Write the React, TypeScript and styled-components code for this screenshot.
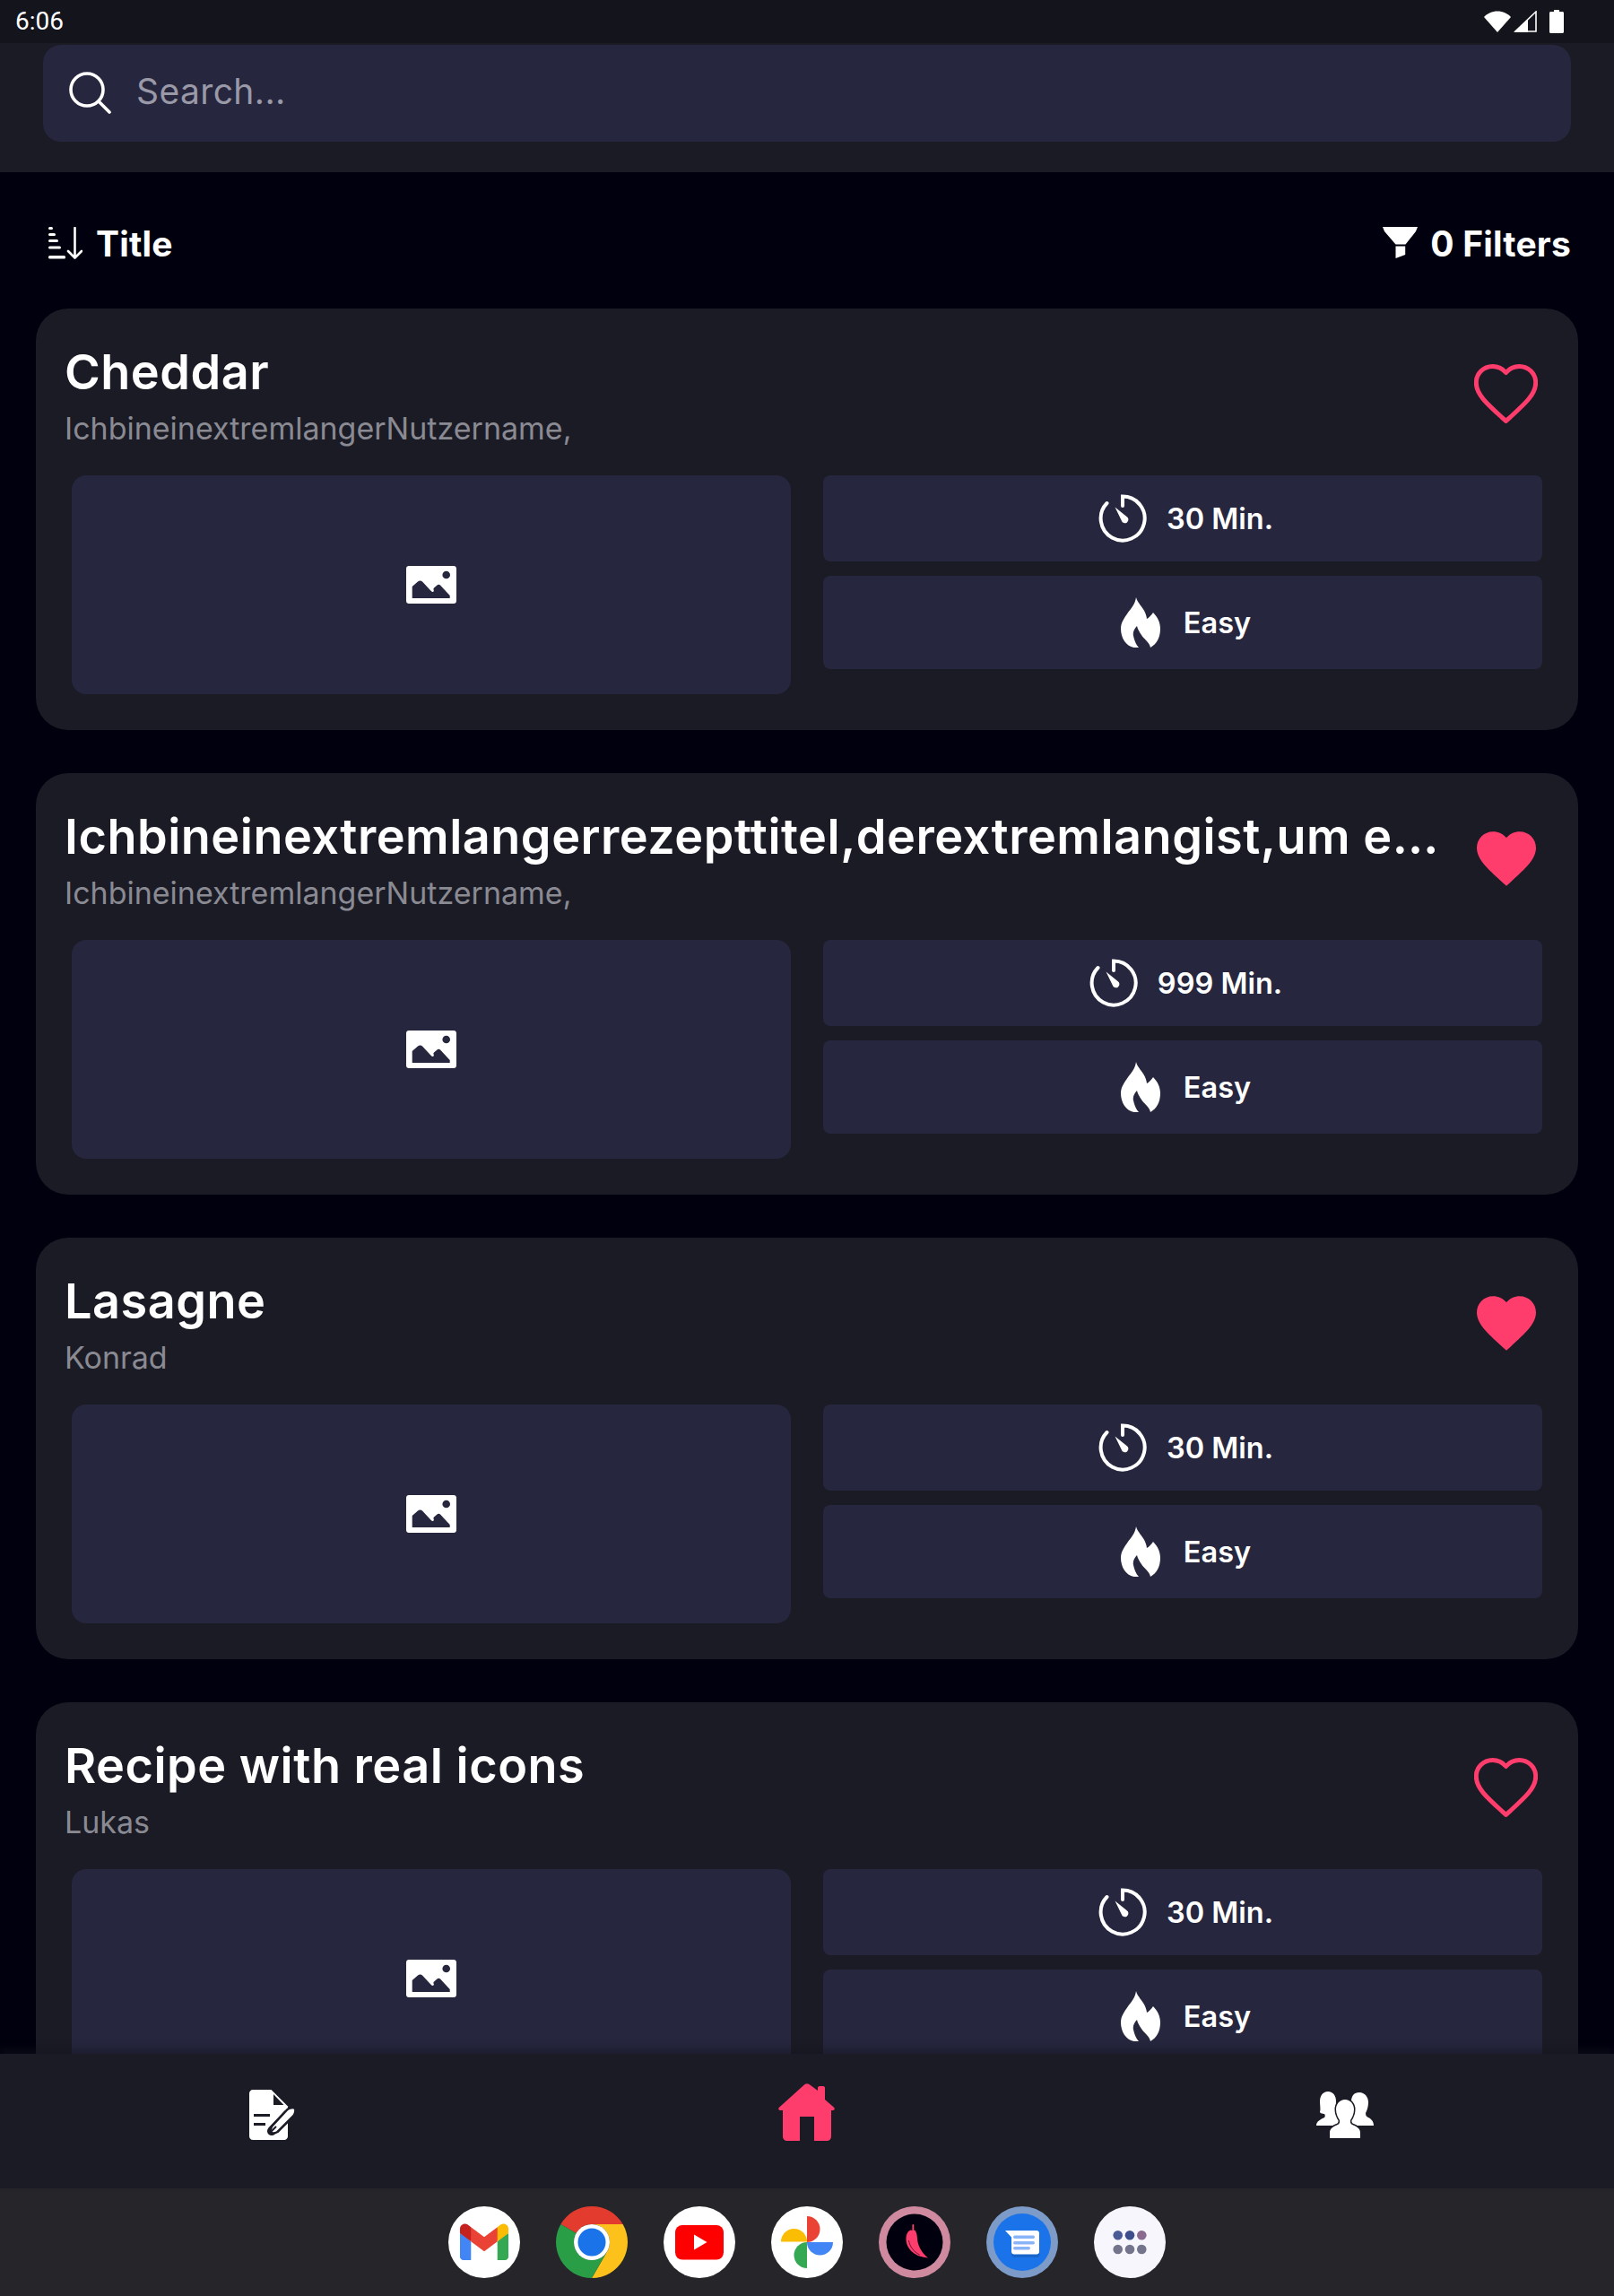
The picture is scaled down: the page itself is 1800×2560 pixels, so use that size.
import React from 'react';
import styled, { createGlobalStyle } from 'styled-components';

const GlobalStyle = createGlobalStyle`
  html, body {
    margin: 0;
    padding: 0;
    background: #00000e;
  }
  * {
    box-sizing: border-box;
  }
`;

const FONT = '"Inter", "Open Sans", "Liberation Sans", sans-serif';
const PINK = '#ff3d6c';

const Screen = styled.div`
  width: 1800px;
  height: 2560px;
  display: flex;
  flex-direction: column;
  overflow: hidden;
  background: #00000e;
  color: #fff;
  font-family: ${FONT};
`;

const StatusBar = styled.div`
  flex: none;
  height: 48px;
  display: flex;
  align-items: center;
  justify-content: space-between;
  padding: 0 56px 0 17px;
  background: #14141c;
`;

const Clock = styled.span`
  font-family: Roboto, sans-serif;
  font-size: 28px;
  line-height: 48px;
`;

const StatusIcons = styled.div`
  display: flex;
  align-items: center;
  gap: 3px;

  svg:last-child {
    margin-left: 11px;
  }
`;

const Header = styled.header`
  flex: none;
  height: 144px;
  padding: 2px 48px 0;
  background: #1b1b26;
`;

const SearchBox = styled.div`
  height: 108px;
  display: flex;
  align-items: center;
  gap: 28px;
  padding: 0 0 0 28px;
  border-radius: 20px;
  background: #26263e;
`;

const Placeholder = styled.span`
  margin-bottom: 5px;
  font-size: 39px;
  letter-spacing: 0.4px;
  color: #9a99a8;
`;

const Body = styled.main`
  flex: 1;
  min-height: 0;
  overflow: hidden;
`;

const SortBar = styled.div`
  height: 152px;
  display: flex;
  align-items: center;
  justify-content: space-between;
  padding: 6px 48px 0 54px;
`;

const SortItem = styled.div<{ $gap: number }>`
  display: flex;
  align-items: center;
  gap: ${(p) => p.$gap}px;
  font-size: 39px;
  font-weight: 700;
  letter-spacing: 0.2px;
`;

const CardList = styled.div`
  display: flex;
  flex-direction: column;
  gap: 48px;
  padding: 0 40px;
`;

const Card = styled.article`
  flex: none;
  height: 470px;
  border-radius: 36px;
  background: #1b1b26;
`;

const CardHead = styled.div`
  height: 186px;
  display: flex;
  align-items: flex-start;
  justify-content: space-between;
  padding: 32px 0 0 32px;
`;

const CardText = styled.div`
  width: 1556px;
  min-width: 0;
`;

const CardTitle = styled.h2`
  margin: 0;
  font-size: 54px;
  font-weight: 600;
  letter-spacing: 0.5px;
  line-height: 78px;
  white-space: nowrap;
  overflow: hidden;
  text-overflow: ellipsis;
`;

const CardAuthor = styled.div`
  font-size: 34px;
  line-height: 48px;
  color: #8a8a93;
`;

const HeartSlot = styled.div`
  width: 122px;
  height: 120px;
  display: flex;
  align-items: center;
  justify-content: center;
  padding: 6px 39px 0 0;
`;

const CardGrid = styled.div`
  display: grid;
  grid-template-columns: 802px 802px;
  column-gap: 36px;
  padding: 0 40px;
`;

const Thumb = styled.div`
  height: 244px;
  display: flex;
  align-items: center;
  justify-content: center;
  border-radius: 16px;
  background: #26263e;
`;

const InfoColumn = styled.div`
  display: flex;
  flex-direction: column;
  gap: 16px;
`;

const InfoRow = styled.div<{ $height: number; $gap: number }>`
  height: ${(p) => p.$height}px;
  display: flex;
  align-items: center;
  justify-content: center;
  gap: ${(p) => p.$gap}px;
  padding-left: 7px;
  border-radius: 8px;
  background: #26263e;
  font-size: 32.5px;
  font-weight: 600;
`;

const BottomNav = styled.nav`
  flex: none;
  position: relative;
  height: 150px;
  display: grid;
  grid-template-columns: repeat(3, 1fr);
  background: #1b1b26;
  box-shadow: 0 -6px 8px rgba(20, 20, 30, 0.45);
`;

const NavItem = styled.div<{ $left?: number; $bottom: number }>`
  display: flex;
  align-items: center;
  justify-content: center;
  padding-left: ${(p) => p.$left ?? 0}px;
  padding-bottom: ${(p) => p.$bottom}px;
`;

const Dock = styled.div`
  flex: none;
  height: 120px;
  display: flex;
  align-items: center;
  justify-content: center;
  gap: 40px;
  background: #25252a;
`;

const DockIcon = styled.svg`
  display: block;
  width: 80px;
  height: 80px;
`;

const WifiIcon = () => (
  <svg width="30" height="24" viewBox="0 0 30 24">
    <path fill="#fff" d="M15 24 0 7C3.8 3 9 .5 15 .5S26.2 3 30 7z" />
  </svg>
);

const CellIcon = () => (
  <svg width="26" height="24" viewBox="0 0 26 24">
    <path fill="none" stroke="#fff" strokeWidth="1.6" d="M25 1 2 23h23z" />
    <path fill="#fff" d="M16 10 1 24h15z" />
  </svg>
);

const BatteryIcon = () => (
  <svg width="16" height="26" viewBox="0 0 16 26">
    <path fill="#fff" d="M5 0h6v2h3.5c.8 0 1.5.7 1.5 1.5v21c0 .8-.7 1.5-1.5 1.5h-13C.7 26 0 25.300 0 24.500v-21C0 2.700.7 2 1.500 2H5z" />
  </svg>
);

const SearchIcon = () => (
  <svg width="48" height="48" viewBox="0 0 48 48" fill="none" stroke="#fff" strokeWidth="3.6" strokeLinecap="round">
    <circle cx="21" cy="20" r="18" />
    <path d="M34 33 46 45" />
  </svg>
);

const SortIcon = () => (
  <svg width="38" height="36" viewBox="0 0 38 36" fill="#fff">
    <rect x="0" y="0" width="5" height="3" rx="1.500" />
    <rect x="0" y="7" width="8" height="3" rx="1.500" />
    <rect x="0" y="14" width="11" height="3" rx="1.500" />
    <rect x="0" y="21.500" width="14" height="3" rx="1.500" />
    <rect x="0" y="32" width="19" height="3.400" rx="1.500" />
    <path fill="none" stroke="#fff" strokeWidth="2.600" strokeLinecap="round" strokeLinejoin="round" d="M29.500 1v33M22 27l7.500 7.500L37 27" />
  </svg>
);

const FilterIcon = () => (
  <svg width="39" height="36" viewBox="0 0 39 36" fill="#fff">
    <path d="M0 0h39l-2 5-11.500 14.500H14.500L2 5z" />
    <path d="M14.500 21.500h10.700V31l-10.700 4z" />
  </svg>
);

const HEART =
  'M12 21.35l-1.45-1.32C5.4 15.36 2 12.28 2 8.5 2 5.42 4.42 3 7.5 3c1.74 0 3.41.81 4.5 2.090C13.090 3.810 14.760 3 16.500 3 19.580 3 22 5.420 22 8.500c0 3.780-3.400 6.860-8.550 11.540L12 21.350z';

const HeartIcon = ({ filled }: { filled: boolean }) =>
  filled ? (
    <svg width="66" height="61" viewBox="2 3 20 18.350">
      <path fill={PINK} d={HEART} />
    </svg>
  ) : (
    <svg width="71" height="66" viewBox="1.300 2.300 21.400 19.750">
      <path fill="none" stroke={PINK} strokeWidth="1.500" strokeLinejoin="round" d={HEART} />
    </svg>
  );

const PictureIcon = () => (
  <svg width="56" height="42" viewBox="0 0 56 42">
    <path
      fill="#fff"
      fillRule="evenodd"
      d="M3 0h50c1.700 0 3 1.300 3 3v36c0 1.700-1.300 3-3 3H3c-1.700 0-3-1.300-3-3V3c0-1.700 1.300-3 3-3zM49 10a4.300 4.300 0 1 0-8.600 0 4.300 4.300 0 0 0 8.600 0zM6.700 36h42v-3L38 21.500c-1-1-2.500-1-3.500 0L31 24.500c-1 1-.5 1.800-.2 2.800.4 1.300-1.300 2.500-2.800 1L18 17.500c-1.500-1.500-3.500-1.500-5 0L6.700 23z"
    />
  </svg>
);

const TimerIcon = () => (
  <svg width="54" height="54" viewBox="0 0 54 54" fill="none">
    <path stroke="#fff" strokeWidth="4" strokeLinecap="round" d="M27 13V2.500A24.500 24.500 0 1 1 9.500 10" />
    <path fill="#fff" d="M18.500 14.500 31.500 25a3.900 3.900 0 1 1-5.700 4.500z" />
  </svg>
);

const FlameIcon = () => (
  <svg width="44" height="56" viewBox="0 0 44 56">
    <path
      fill="#fff"
      d="M17 0C19 8 28 13 29 24C31 23 34 20 36 17C41 22 44 28 44 35C44 45 40 52 33 56C32 50 25 46 23 42C21 39 19 36 18 32C15 35 13 39 14 43C15 48 17 53 20 56C8 58 0 47 0 35C0 28 4 23 8 17C12 12 16 7 17 0Z"
    />
  </svg>
);

const NoteIcon = () => (
  <svg width="52" height="56" viewBox="0 0 52 56">
    <path fill="#fff" d="M4 0h20.500L43 18.500V52c0 2.200-1.800 4-4 4H4c-2.200 0-4-1.800-4-4V4c0-2.200 1.800-4 4-4z" />
    <path fill="#1b1b26" d="M27 5v12h11.500zM5 27h18v3H5zM5 37h13v3H5z" />
    <path stroke="#1b1b26" strokeWidth="10" strokeLinecap="round" d="M25 46 43 27" />
    <path fill="#fff" stroke="#1b1b26" strokeWidth="2.500" strokeLinejoin="round" d="M22.500 47.500 25 41 42.500 22c2-2 7-2.500 8.500-1 1 2 0 6.500-2 8.500L31.500 47c-2.500 1.500-6 1.800-9 .5z" />
    <path stroke="#1b1b26" strokeWidth="2" d="M24 47 30 41" />
  </svg>
);

const HomeIcon = () => (
  <svg width="64" height="64" viewBox="0 0 64 64">
    <path
      fill={PINK}
      fillRule="evenodd"
      d="M29.500 1c1.500-1 3.500-1 5 0l9.500 7V5c0-1 .7-2 2-2h4c1.300 0 2 1 2 2v13l9.800 8.500c1.800 1.500.8 3.500-1.300 3.500H59v29c0 3-2.200 5-5 5H10c-2.800 0-5-2-5-5V30H2.500C.4 30-.600 28 1.200 26.500zM24 37v27h16V37z"
    />
  </svg>
);

const PeopleIcon = () => (
  <svg width="64" height="52" viewBox="0 0 64 52" fill="#fff">
    <path d="M13 0C19 0 22 5 22 11C22 16 21 19 21 22C21 25 22 26 24 27L27 38H0C0 33 5 31 9 29C10 28 10 26 9 25C7 25 4 24 4 23C5 20 4 15 4 11C4 5 7 0 13 0Z" />
    <path d="M48 1C54 1 58 6 58 12C58 18 56 22 55 24C55 27 56 28 58 29C61 30.500 64 33 64 38H37L40 27C42 26 43 25 43 22C43 19 39 16 39 11C39 5 42 1 48 1Z" />
    <path
      stroke="#1b1b26"
      strokeWidth="3"
      paintOrder="stroke"
      d="M32 9C38 9 42 14 42 20C42 25 40 29 38 32C37.500 35 38.500 36 40 37C45 39 49 41 49 46V52H15V46C15 41 19 39 24 37C25.500 36 26.500 35 26 32C24 29 22 25 22 20C22 14 26 9 32 9Z"
    />
  </svg>
);

const GmailIcon = () => (
  <DockIcon viewBox="0 0 80 80">
    <circle cx="40" cy="40" r="40" fill="#fff" />
    <g transform="translate(13 19.500) scale(0.211)">
      <path fill="#4285F4" d="M58.182 192.05V93.14L27.507 65.077 0 49.504v125.091c0 9.658 7.825 17.455 17.455 17.455h40.727Z" />
      <path fill="#34A853" d="M197.818 192.05h40.727c9.659 0 17.455-7.826 17.455-17.455V49.505l-31.156 17.837-27.026 25.798v98.91Z" />
      <path fill="#EA4335" d="m58.182 93.14-4.174-38.647 4.174-36.989L128 69.868l69.818-52.364 4.669 34.992-4.669 40.644L128 145.504z" />
      <path fill="#FBBC04" d="M197.818 17.504V93.14L256 49.504V26.231c0-21.585-24.64-33.89-41.89-20.945l-16.292 12.218Z" />
      <path fill="#C5221F" d="m0 49.504 26.759 20.07L58.182 93.14V17.504L41.89 5.286C24.61-7.66 0 4.646 0 26.23v23.273Z" />
    </g>
  </DockIcon>
);

const ChromeIcon = () => (
  <DockIcon viewBox="0 0 80 80">
    <path fill="#e33b2e" d="M5.360 20A40 40 0 0 1 74.640 20L40 20A20 20 0 0 0 22.680 30z" />
    <path fill="#fcc21b" d="M74.640 20A40 40 0 0 1 40 80L57.320 50A20 20 0 0 0 40 20z" />
    <path fill="#2a9d47" d="M40 80A40 40 0 0 1 5.360 20L22.680 30A20 20 0 0 0 57.320 50z" />
    <circle cx="40" cy="40" r="20" fill="#fff" />
    <circle cx="40" cy="40" r="15.500" fill="#1a73e8" />
  </DockIcon>
);

const YoutubeIcon = () => (
  <DockIcon viewBox="0 0 80 80">
    <circle cx="40" cy="40" r="40" fill="#fff" />
    <rect x="13" y="21" width="54" height="38.500" rx="8" fill="#f00" />
    <path fill="#fff" d="M34 31.500 48.500 40 34 48.500z" />
  </DockIcon>
);

const PhotosIcon = () => (
  <DockIcon viewBox="0 0 80 80">
    <circle cx="40" cy="40" r="40" fill="#fff" />
    <path fill="#fbbc04" d="M11 39.500A14.500 14.500 0 0 1 40 39.500z" />
    <path fill="#ea4335" d="M40 11A14.500 14.500 0 0 1 40 40z" />
    <path fill="#4285f4" d="M40 40H69A14.500 14.500 0 0 1 40 40z" />
    <path fill="#34a853" d="M40 40V69A14.500 14.500 0 0 1 40 40z" />
  </DockIcon>
);

const ChiliIcon = () => (
  <DockIcon viewBox="0 0 80 80">
    <circle cx="40" cy="40" r="40" fill="#cf8aa0" />
    <circle cx="40" cy="40" r="31.500" fill="#00000e" />
    <path stroke={PINK} strokeWidth="1.800" strokeLinecap="round" d="M38.300 21v7" />
    <path fill={PINK} d="M36 26.500c-3.500.5-5.700 5-5.500 10.500.4 10 9 19.500 24.500 20.500-6.500-5-11.500-13-12-21.500-.2-5-1.500-8.500-3-9.500-1.500.6-3 .6-4 0z" />
    <path fill="none" stroke="#00000e" strokeWidth="0.600" d="M33.500 38c1 7 6 13 12 16" />
  </DockIcon>
);

const MessagesIcon = () => (
  <DockIcon viewBox="0 0 80 80">
    <circle cx="40" cy="40" r="40" fill="#7d9bc9" />
    <circle cx="40" cy="40" r="32" fill="#1a73e8" />
    <path fill="#1557b0" opacity="0.55" d="M28 30h29c1.500 0 2.500 1 2.500 2.500v21c0 1.500-1 3.500-2.500 3.500H31c-1.500 0-3-1.500-3-3z" />
    <path fill="#fff" d="M21 27h35c1.700 0 3 1.300 3 3v20.500c0 1.700-1.300 3-3 3H31c-1.700 0-3-1.300-3-3V34.500z" />
    <rect x="30" y="32.500" width="24" height="3.400" rx="1.700" fill="#8ab4f8" />
    <rect x="30" y="39" width="24" height="3.400" rx="1.700" fill="#8ab4f8" />
    <rect x="30" y="45" width="19" height="3.400" rx="1.700" fill="#8ab4f8" />
  </DockIcon>
);

const AppsIcon = () => (
  <DockIcon viewBox="0 0 80 80">
    <circle cx="40" cy="40" r="40" fill="#f8f6fd" />
    <circle cx="26.700" cy="32.300" r="5.300" fill="#4a5a94" />
    <circle cx="40" cy="32.300" r="5.300" fill="#3e4d8c" />
    <circle cx="53.300" cy="32.300" r="5.300" fill="#8a6b8f" />
    <circle cx="26.700" cy="48" r="5.300" fill="#74758c" />
    <circle cx="40" cy="48" r="5.300" fill="#74758c" />
    <circle cx="53.300" cy="48" r="5.300" fill="#74758c" />
  </DockIcon>
);

type Recipe = {
  title: string;
  author: string;
  minutes: number;
  favorite: boolean;
};

const recipes: Recipe[] = [
  { title: 'Cheddar', author: 'IchbineinextremlangerNutzername,', minutes: 30, favorite: false },
  {
    title: 'Ichbineinextremlangerrezepttitel,derextremlangist,um es zu testen',
    author: 'IchbineinextremlangerNutzername,',
    minutes: 999,
    favorite: true,
  },
  { title: 'Lasagne', author: 'Konrad', minutes: 30, favorite: true },
  { title: 'Recipe with real icons', author: 'Lukas', minutes: 30, favorite: false },
];

const RecipeCard = ({ recipe }: { recipe: Recipe }) => (
  <Card>
    <CardHead>
      <CardText>
        <CardTitle>{recipe.title}</CardTitle>
        <CardAuthor>{recipe.author}</CardAuthor>
      </CardText>
      <HeartSlot>
        <HeartIcon filled={recipe.favorite} />
      </HeartSlot>
    </CardHead>
    <CardGrid>
      <Thumb>
        <PictureIcon />
      </Thumb>
      <InfoColumn>
        <InfoRow $height={96} $gap={22}>
          <TimerIcon />
          <span>{recipe.minutes} Min.</span>
        </InfoRow>
        <InfoRow $height={104} $gap={26}>
          <FlameIcon />
          <span>Easy</span>
        </InfoRow>
      </InfoColumn>
    </CardGrid>
  </Card>
);

export default function App() {
  return (
    <Screen>
      <GlobalStyle />
      <StatusBar>
        <Clock>6:06</Clock>
        <StatusIcons>
          <WifiIcon />
          <CellIcon />
          <BatteryIcon />
        </StatusIcons>
      </StatusBar>
      <Header>
        <SearchBox>
          <SearchIcon />
          <Placeholder>Search...</Placeholder>
        </SearchBox>
      </Header>
      <Body>
        <SortBar>
          <SortItem $gap={15}>
            <SortIcon />
            <span>Title</span>
          </SortItem>
          <SortItem $gap={14}>
            <FilterIcon />
            <span>0 Filters</span>
          </SortItem>
        </SortBar>
        <CardList>
          {recipes.map((recipe) => (
            <RecipeCard key={recipe.title} recipe={recipe} />
          ))}
        </CardList>
      </Body>
      <BottomNav>
        <NavItem $left={7} $bottom={14}>
          <NoteIcon />
        </NavItem>
        <NavItem $bottom={20}>
          <HomeIcon />
        </NavItem>
        <NavItem $bottom={14}>
          <PeopleIcon />
        </NavItem>
      </BottomNav>
      <Dock>
        <GmailIcon />
        <ChromeIcon />
        <YoutubeIcon />
        <PhotosIcon />
        <ChiliIcon />
        <MessagesIcon />
        <AppsIcon />
      </Dock>
    </Screen>
  );
}
